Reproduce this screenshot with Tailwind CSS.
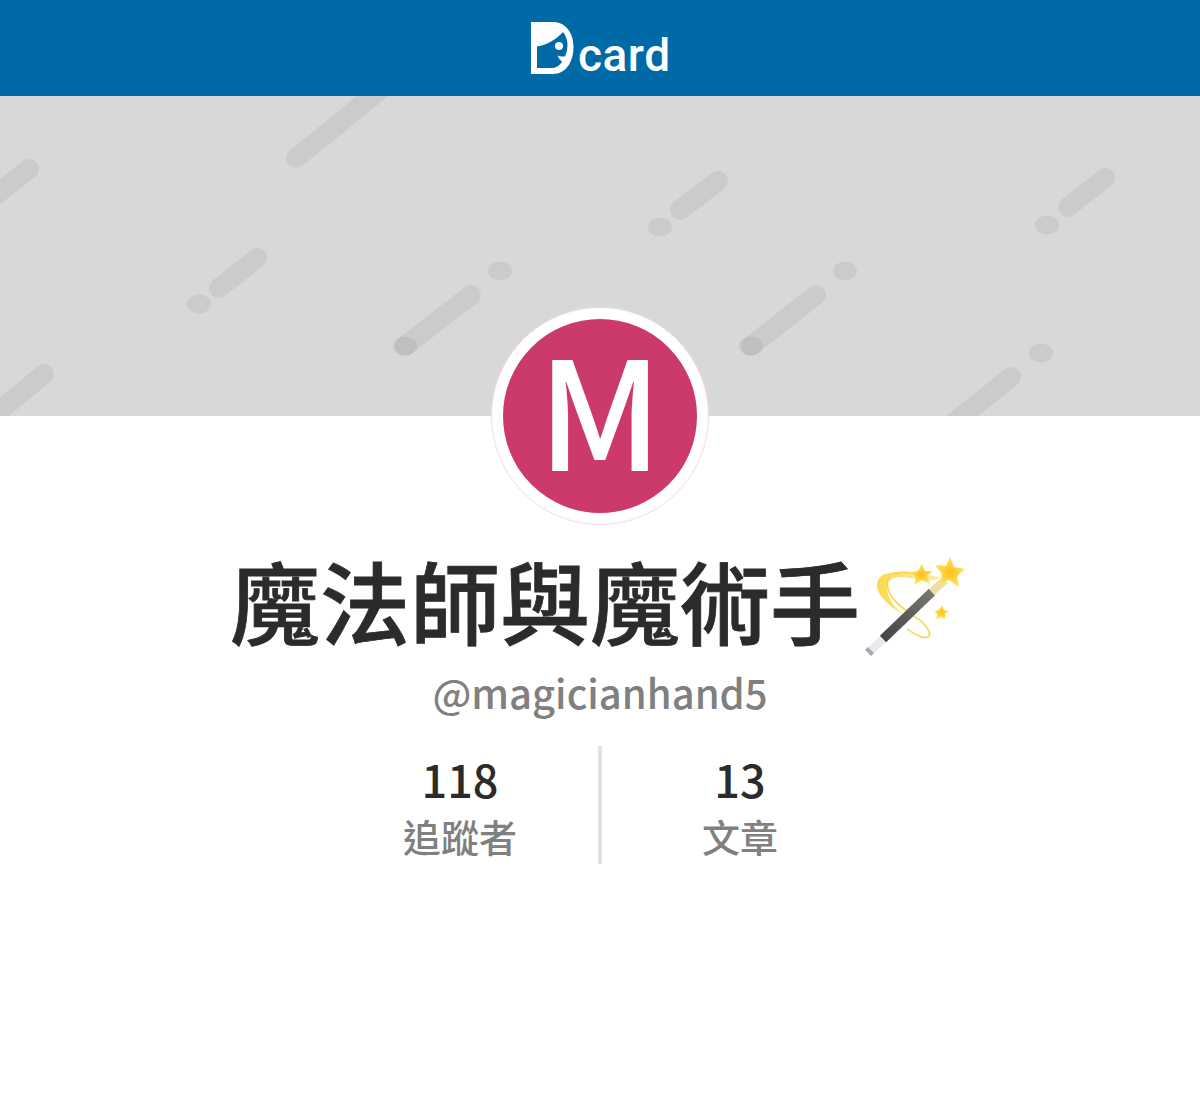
<!DOCTYPE html>
<html lang="zh-TW">
<head>
    <meta charset="UTF-8">
    <title>魔法師與魔術手 - Dcard</title>
    <script src="https://cdn.jsdelivr.net/npm/@tailwindcss/browser@4"></script>
</head>
<body class="bg-white font-['Noto_Sans_CJK_TC','Noto_Sans',sans-serif] h-[1110px] overflow-hidden">
    <!-- header -->
    <header class="h-24 bg-[#006aa6] flex items-start justify-center">
        <div class="flex items-start w-[140px] h-24 text-white">
            <svg class="mt-[22px] ml-[1px] w-[43px] h-[52px] shrink-0" viewBox="531 22 43 52" fill="#fff">
                <path fill-rule="evenodd" d="M531 22H553C565 22 573.500 32 573.500 47C573.500 63 565 74 553 74H531ZM537 46.500V68H552C556 68 560 65.500 562 61.500C560 60 558.500 58 557.500 55.500C560 56.500 562.500 56.500 565 56.500C566.500 53 567.500 49 567.500 45C567.500 40 566 36 563 32C556 39.500 547 45 537 46.500Z"/>
                <circle cx="559" cy="46" r="4"/>
            </svg>
            <span class="ml-[4px] mt-[25px] font-['Roboto',sans-serif] text-[46px] leading-[60px] font-medium tracking-[0.5px]">card</span>
        </div>
    </header>

    <!-- banner -->
    <div class="h-[320px] bg-[#d8d8d8] overflow-hidden">
        <svg class="block w-[1200px] h-[320px]" viewBox="0 96 1200 320" fill="#000" fill-opacity="0.06" stroke="#000" stroke-opacity="0.06" stroke-width="20" stroke-linecap="round">
            <path d="M296 158L400 74" />
            <path d="M29 169L-20 207" />
            <path d="M219 288L257 258" />
            <path d="M405 346L471 295" />
            <path d="M44 374L-20 427" />
            <path d="M680 210L718 181" />
            <path d="M751 346L816 295" />
            <path d="M1068 207L1105 178" />
            <path d="M1011 377L940 434" />
            <g stroke="none">
                <ellipse cx="199" cy="304" rx="12" ry="9.500" />
                <ellipse cx="405" cy="346" rx="12" ry="9.500" />
                <ellipse cx="500" cy="271" rx="12" ry="9.500" />
                <ellipse cx="660" cy="227" rx="12" ry="9.500" />
                <ellipse cx="751" cy="346" rx="12" ry="9.500" />
                <ellipse cx="845" cy="271" rx="12" ry="9.500" />
                <ellipse cx="1047" cy="225" rx="12" ry="9.500" />
                <ellipse cx="1041" cy="353" rx="12" ry="9.500" />
            </g>
        </svg>
    </div>

    <!-- profile -->
    <main class="flex flex-col items-center">
        <div class="relative -mt-[109px] w-[218px] h-[218px] rounded-full bg-[#cc3a6c] border-[12px] border-white outline outline-1 -outline-offset-1 outline-[#cc3a6c]/20 flex items-center justify-center">
            <span class="text-white text-[150px] leading-none font-medium -mt-[21px]">M</span>
        </div>

        <div class="flex items-center mt-[19px] h-[110px]">
            <h1 class="text-[#2b2b2b] text-[90px] leading-[110px] font-medium [-webkit-text-stroke:0.8px_#2b2b2b] whitespace-nowrap">魔法師與魔術手</h1>
            <svg class="w-[110px] h-[110px] mt-[10px] shrink-0" viewBox="860 550 110 110">
                <defs>
                    <radialGradient id="star">
                        <stop offset="0" stop-color="#fbbf1e" />
                        <stop offset="1" stop-color="#ffe65c" />
                    </radialGradient>
                    <linearGradient id="shaft" x1="0" y1="1" x2="1" y2="0">
                        <stop offset="0" stop-color="#444442" />
                        <stop offset="1" stop-color="#77766e" />
                    </linearGradient>
                    <linearGradient id="ribbon" x1="1" y1="0" x2="0" y2="0">
                        <stop offset="0" stop-color="#fdf0b0" />
                        <stop offset="1" stop-color="#fbd94f" />
                    </linearGradient>
                </defs>
                <path d="M941 578C925 575 900 570 885 575C875 579 875 590 882 598C888 606 897 612 906 617C895 610 888 600 887 590C886 582 892 578 900 578C915 578 930 586 941 578Z" fill="url(#ribbon)" />
                <path d="M913 574C905 573 897 573 892 575C886 579 886 590 892 598C900 610 914 616 922 623C928 629 931 634 929 637C926 641 915 636 907 630" fill="none" stroke="#f8d548" stroke-width="1.500" />
                <path d="M870 652L883 640" stroke="#e9e9ee" stroke-width="8.500" />
                <path d="M868 654L871 651" stroke="#a8a8b8" stroke-width="8.500" />
                <path d="M883 640L932 593" stroke="url(#shaft)" stroke-width="9" />
                <path d="M932 593L945 581" stroke="#efdca6" stroke-width="8" />
                <path d="M950 558L954 568L965 570L957 577L959 588L949 581L940 585L942 575L935 566L946 567Z" fill="url(#star)" />
                <path d="M922 565L925 572L933 572L927 577L930 585L922 581L914 586L916 578L910 573L918 572Z" fill="url(#star)" />
                <path d="M942 606L944 611L949 612L945 615L945 620L941 618L936 620L937 615L934 612L939 611Z" fill="url(#star)" />
            </svg>
        </div>

        <p class="text-[#808080] text-[40px] leading-[60px] font-medium mt-[8px]">@magicianhand5</p>

        <div class="flex items-stretch mt-[24px] h-[118px]">
            <div class="w-[276px] flex flex-col items-center pt-[3px]">
                <span class="text-[#2b2b2b] text-[45px] leading-[60px] font-medium">118</span>
                <span class="text-[#808080] text-[38px] leading-[54px] font-medium">追蹤者</span>
            </div>
            <div class="w-1 bg-[#e0e0e0]"></div>
            <div class="w-[276px] flex flex-col items-center pt-[3px]">
                <span class="text-[#2b2b2b] text-[45px] leading-[60px] font-medium">13</span>
                <span class="text-[#808080] text-[38px] leading-[54px] font-medium">文章</span>
            </div>
        </div>
    </main>
</body>
</html>
